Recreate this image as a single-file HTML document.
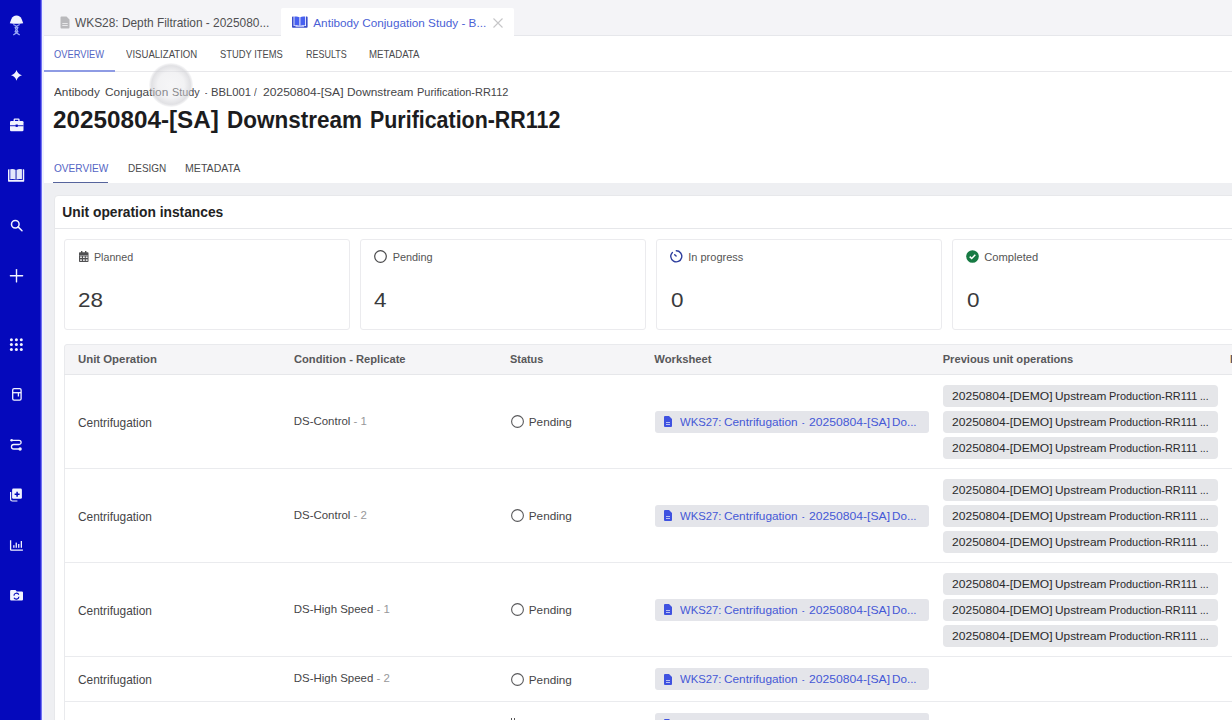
<!DOCTYPE html>
<html><head><meta charset="utf-8"><style>
*{box-sizing:border-box;margin:0;padding:0}
html,body{width:1232px;height:720px;overflow:hidden;background:#fff;font-family:"Liberation Sans",sans-serif;color:#333}
.t{position:absolute;line-height:1;white-space:nowrap}
.b{position:absolute}
svg{position:absolute;overflow:visible}
</style></head><body>
<div class="b" style="left:0;top:0;width:42px;height:720px;background:#0509bc"></div>
<div class="b" style="left:40px;top:0;width:1px;height:720px;background:#2a2ad8"></div><div class="b" style="left:41px;top:0;width:1px;height:720px;background:#7070f2"></div>
<div class="b" style="left:42px;top:0;width:1190px;height:36px;background:#f4f4f7;border-bottom:1px solid #e6e7eb"></div>
<div class="b" style="left:281px;top:8px;width:233px;height:29px;background:#fff;border-radius:2px 2px 0 0"></div>
<svg style="left:60px;top:16px" width="10" height="13" viewBox="0 0 10 13"><path d="M1.5 0.5h5l3 3v8a1 1 0 0 1-1 1h-7a1 1 0 0 1-1-1v-10a1 1 0 0 1 1-1z" fill="#b9b9bc"/><rect x="2.3" y="7" width="5.4" height="1" fill="#e8e8ea"/><rect x="2.3" y="9" width="5.4" height="1" fill="#e8e8ea"/></svg>
<div class="t" style="left:75px;top:18.48px;font-size:11.9px;color:#505052;font-weight:normal;">WKS28: Depth Filtration - 2025080...</div>
<svg style="left:292px;top:16.4px" width="16" height="12" viewBox="0 0 16 12"><path d="M0 1.2 Q0 0.4 0.8 0.4 L1.6 0.4 L1.6 10 L14 10 L14 0.4 L14.8 0.4 Q15.6 0.4 15.6 1.2 L15.6 11 Q15.6 11.7 14.8 11.7 L0.8 11.7 Q0 11.7 0 11z" fill="#3a4cc9"/><path d="M2.4 0.6 Q5.5 0 7.3 1.3 L7.3 9.8 Q5 8.9 2.4 9.6z" fill="#4760f0"/><path d="M8.3 1.3 Q10.1 0 13.2 0.6 L13.2 9.6 Q10.6 8.9 8.3 9.8z" fill="#4760f0"/><rect x="7.3" y="1" width="1" height="9" fill="#a9b3f3"/><path d="M3.5 10.6 H12.1" stroke="#c9d0fb" stroke-width="0.9"/></svg>
<div class="t" style="left:313.3px;top:16.62px;font-size:11.74px;color:#4a5fd5;font-weight:normal;">Antibody Conjugation Study - B...</div>
<svg style="left:493px;top:17.5px" width="10" height="10" viewBox="0 0 10 10"><path d="M0.5 0.5L9.5 9.5M9.5 0.5L0.5 9.5" stroke="#c6c6c8" stroke-width="1.1"/></svg>
<div class="b" style="left:42px;top:71px;width:1190px;height:1px;background:#e8e8eb"></div>
<div class="b" style="left:42px;top:70px;width:73px;height:2px;background:#8e9be4"></div>
<div class="t" style="left:54px;top:48.65px;font-size:11px;color:#5465c4;font-weight:normal;"><span style="display:inline-block;transform-origin:0 0;transform:scaleX(0.8461)">OVERVIEW</span></div>
<div class="t" style="left:126.3px;top:48.65px;font-size:11px;color:#4a4a4c;font-weight:normal;"><span style="display:inline-block;transform-origin:0 0;transform:scaleX(0.8721)">VISUALIZATION</span></div>
<div class="t" style="left:220px;top:48.65px;font-size:11px;color:#4a4a4c;font-weight:normal;"><span style="display:inline-block;transform-origin:0 0;transform:scaleX(0.8519)">STUDY ITEMS</span></div>
<div class="t" style="left:305.5px;top:48.65px;font-size:11px;color:#4a4a4c;font-weight:normal;"><span style="display:inline-block;transform-origin:0 0;transform:scaleX(0.8163)">RESULTS</span></div>
<div class="t" style="left:368.8px;top:48.65px;font-size:11px;color:#4a4a4c;font-weight:normal;"><span style="display:inline-block;transform-origin:0 0;transform:scaleX(0.8791)">METADATA</span></div>
<div class="t" style="left:54.2px;top:86.24px;font-size:11.72px;color:#454547;font-weight:normal;"><span style="display:inline-block;transform-origin:0 0;transform:scaleX(1.0043)">Antibody</span></div>
<div class="t" style="left:104.9px;top:86.24px;font-size:11.72px;color:#454547;font-weight:normal;"><span style="display:inline-block;transform-origin:0 0;transform:scaleX(1.0113)">Conjugation</span></div>
<div class="t" style="left:172.1px;top:86.24px;font-size:11.72px;color:#454547;font-weight:normal;"><span style="display:inline-block;transform-origin:0 0;transform:scaleX(0.9233)">Study</span></div>
<div class="t" style="left:205.3px;top:86.24px;font-size:11.72px;color:#454547;font-weight:normal;"><span style="display:inline-block;transform-origin:0 0;transform:scaleX(0.5750)">-</span></div>
<div class="t" style="left:211.14px;top:86.24px;font-size:11.72px;color:#454547;font-weight:normal;"><span style="display:inline-block;transform-origin:0 0;transform:scaleX(0.9610)">BBL001</span></div>
<div class="t" style="left:254.0px;top:86.24px;font-size:11.72px;color:#454547;font-weight:normal;"><span style="display:inline-block;transform-origin:0 0;transform:scaleX(0.8250)">/</span></div>
<div class="t" style="left:262.8px;top:86.24px;font-size:11.72px;color:#454547;font-weight:normal;"><span style="display:inline-block;transform-origin:0 0;transform:scaleX(1.0295)">20250804-[SA]</span></div>
<div class="t" style="left:346.59px;top:86.24px;font-size:11.72px;color:#454547;font-weight:normal;"><span style="display:inline-block;transform-origin:0 0;transform:scaleX(1.0109)">Downstream</span></div>
<div class="t" style="left:416.76px;top:86.24px;font-size:11.72px;color:#454547;font-weight:normal;"><span style="display:inline-block;transform-origin:0 0;transform:scaleX(0.9375)">Purification-RR112</span></div>
<div class="t" style="left:53.28px;top:107.57px;font-size:23.8px;color:#1c1c1e;font-weight:bold;"><span style="display:inline-block;transform-origin:0 0;transform:scaleX(1.0193)">20250804-[SA]</span></div>
<div class="t" style="left:226.95px;top:107.57px;font-size:23.8px;color:#1c1c1e;font-weight:bold;"><span style="display:inline-block;transform-origin:0 0;transform:scaleX(0.9454)">Downstream</span></div>
<div class="t" style="left:369.9px;top:107.57px;font-size:23.8px;color:#1c1c1e;font-weight:bold;"><span style="display:inline-block;transform-origin:0 0;transform:scaleX(0.8995)">Purification-RR112</span></div>
<div class="t" style="left:53.9px;top:162.65px;font-size:11px;color:#5465c4;font-weight:normal;"><span style="display:inline-block;transform-origin:0 0;transform:scaleX(0.9189)">OVERVIEW</span></div>
<div class="t" style="left:127.5px;top:162.65px;font-size:11px;color:#4a4a4c;font-weight:normal;"><span style="display:inline-block;transform-origin:0 0;transform:scaleX(0.9081)">DESIGN</span></div>
<div class="t" style="left:185px;top:162.65px;font-size:11px;color:#4a4a4c;font-weight:normal;"><span style="display:inline-block;transform-origin:0 0;transform:scaleX(0.9627)">METADATA</span></div>
<div class="b" style="left:42px;top:183px;width:1190px;height:537px;background:#eeeff2"></div>
<div class="b" style="left:53px;top:181.5px;width:55px;height:1.5px;background:#56649c"></div>
<div class="b" style="left:54px;top:195px;width:1200px;height:600px;background:#fff;border:1px solid #e7e8eb;border-radius:4px"></div>
<div class="b" style="left:55px;top:228px;width:1190px;height:1px;background:#e6e7ea"></div>
<div class="t" style="left:62.3px;top:205.57px;font-size:13.8px;color:#222;font-weight:bold;">Unit operation instances</div>
<div class="b" style="left:64px;top:239px;width:286px;height:91px;border:1px solid #ebebee;border-radius:3px;background:#fff"></div>
<div class="b" style="left:360px;top:239px;width:286px;height:91px;border:1px solid #ebebee;border-radius:3px;background:#fff"></div>
<div class="b" style="left:656px;top:239px;width:286px;height:91px;border:1px solid #ebebee;border-radius:3px;background:#fff"></div>
<div class="b" style="left:952px;top:239px;width:286px;height:91px;border:1px solid #ebebee;border-radius:3px;background:#fff"></div>
<svg style="left:78.5px;top:250.6px" width="10" height="12" viewBox="0 0 10 12"><rect x="0" y="1.2" width="9.5" height="9.9" rx="0.8" fill="#505052"/><rect x="2" y="0" width="1.4" height="2.4" fill="#505052"/><rect x="6" y="0" width="1.4" height="2.4" fill="#505052"/><rect x="0.6" y="4" width="8.3" height="0.8" fill="#a2a2a4"/><g fill="#fff"><rect x="1.1" y="5.5" width="1.8" height="1.4"/><rect x="4" y="5.5" width="1.8" height="1.4"/><rect x="6.8" y="5.5" width="1.8" height="1.4"/><rect x="1.1" y="8.4" width="1.8" height="1.4"/><rect x="4" y="8.4" width="1.8" height="1.4"/><rect x="6.8" y="8.4" width="1.8" height="1.4"/></g></svg>
<div class="t" style="left:94px;top:251.92px;font-size:10.68px;color:#555;font-weight:normal;">Planned</div>
<svg style="left:373.5px;top:250px" width="13" height="13" viewBox="0 0 13 13"><circle cx="6.5" cy="6.5" r="5.8" stroke="#4a4a4c" stroke-width="1.2" fill="none"/></svg>
<div class="t" style="left:392.7px;top:251.74px;font-size:10.9px;color:#555;font-weight:normal;">Pending</div>
<svg style="left:670.3px;top:250px" width="13" height="13" viewBox="0 0 13 13"><path d="M6.3 0.8 A5.5 5.5 0 1 1 2.4 2.4" stroke="#2f3f9e" stroke-width="1.4" fill="none" stroke-linecap="round"/><path d="M4.7 4.7 L6.1 6.1" stroke="#2f3f9e" stroke-width="1.4" stroke-linecap="round"/></svg>
<div class="t" style="left:688.3px;top:251.66px;font-size:10.99px;color:#555;font-weight:normal;">In progress</div>
<svg style="left:965.8px;top:250px" width="13" height="13" viewBox="0 0 13 13"><circle cx="6.5" cy="6.5" r="6.3" fill="#177a43"/><path d="M3.7 6.6 L5.7 8.5 L9.3 4.7" stroke="#fff" stroke-width="1.5" fill="none"/></svg>
<div class="t" style="left:984.3px;top:251.51px;font-size:11.17px;color:#555;font-weight:normal;">Completed</div>
<div class="t" style="left:78.4px;top:289.15px;font-size:21px;color:#3a3a3c;font-weight:normal;"><span style="display:inline-block;transform-origin:0 0;transform:scaleX(1.07)">28</span></div>
<div class="t" style="left:374px;top:289.15px;font-size:21px;color:#3a3a3c;font-weight:normal;"><span style="display:inline-block;transform-origin:0 0;transform:scaleX(1.07)">4</span></div>
<div class="t" style="left:670.8px;top:289.15px;font-size:21px;color:#3a3a3c;font-weight:normal;"><span style="display:inline-block;transform-origin:0 0;transform:scaleX(1.07)">0</span></div>
<div class="t" style="left:966.5px;top:289.15px;font-size:21px;color:#3a3a3c;font-weight:normal;"><span style="display:inline-block;transform-origin:0 0;transform:scaleX(1.07)">0</span></div>
<div class="b" style="left:64px;top:344px;width:1200px;height:31px;background:#f5f5f7;border:1px solid #e9eaed;border-radius:3px 3px 0 0"></div>
<div class="b" style="left:64px;top:374px;width:1200px;height:400px;border-left:1px solid #e9eaed;background:#fff"></div>
<div class="b" style="left:64px;top:374px;width:1200px;height:1px;background:#e6e7ea"></div>
<div class="t" style="left:78px;top:353.53px;font-size:11.38px;color:#58585a;font-weight:bold;">Unit Operation</div>
<div class="t" style="left:294px;top:353.71px;font-size:11.17px;color:#58585a;font-weight:bold;">Condition - Replicate</div>
<div class="t" style="left:510px;top:353.94px;font-size:10.9px;color:#58585a;font-weight:bold;">Status</div>
<div class="t" style="left:654.3px;top:353.64px;font-size:11.25px;color:#58585a;font-weight:bold;">Worksheet</div>
<div class="t" style="left:942.7px;top:353.72px;font-size:11.15px;color:#58585a;font-weight:bold;">Previous unit operations</div>
<div class="t" style="left:1230px;top:353.72px;font-size:11.15px;color:#58585a;font-weight:bold;">I</div>
<div class="b" style="left:65px;top:468px;width:1190px;height:1px;background:#eaebee"></div>
<div class="t" style="left:78px;top:417.69px;font-size:11.89px;color:#454547;font-weight:normal;">Centrifugation</div>
<div class="t" style="left:293.8px;top:415.67px;font-size:11.45px;color:#454547;font-weight:normal;">DS-Control <span style="color:#98989a">- 1</span></div>
<svg style="left:510.5px;top:415.00px" width="13" height="13" viewBox="0 0 13 13"><circle cx="6.5" cy="6.5" r="5.9" stroke="#59595b" stroke-width="1.1" fill="none"/></svg>
<div class="t" style="left:528.8px;top:416.44px;font-size:11.72px;color:#454547;font-weight:normal;">Pending</div>
<div class="b" style="left:655px;top:410.50px;width:274px;height:22px;background:#e4e5ea;border-radius:3px"></div>
<svg style="left:664.2px;top:416.00px" width="8" height="11" viewBox="0 0 8 11"><path d="M0 1a1 1 0 0 1 1-1h4l3 3v7a1 1 0 0 1-1 1h-6a1 1 0 0 1-1-1z" fill="#3f52e0"/><rect x="2" y="6" width="4" height="0.9" fill="#c9cff7"/><rect x="2" y="8" width="4" height="0.9" fill="#c9cff7"/></svg>
<div class="t" style="left:680.4px;top:415.91px;font-size:11.75px;color:#4458d6;font-weight:normal;"><span style="display:inline-block;transform-origin:0 0;transform:scaleX(0.9619)">WKS27:</span></div>
<div class="t" style="left:724.0px;top:415.91px;font-size:11.75px;color:#4458d6;font-weight:normal;"><span style="display:inline-block;transform-origin:0 0;transform:scaleX(1.0068)">Centrifugation</span></div>
<div class="t" style="left:802.1px;top:415.91px;font-size:11.75px;color:#4458d6;font-weight:normal;"><span style="display:inline-block;transform-origin:0 0;transform:scaleX(0.6250)">-</span></div>
<div class="t" style="left:809.2px;top:415.91px;font-size:11.75px;color:#4458d6;font-weight:normal;"><span style="display:inline-block;transform-origin:0 0;transform:scaleX(1.0333)">20250804-[SA]</span></div>
<div class="t" style="left:892.41px;top:415.91px;font-size:11.75px;color:#4458d6;font-weight:normal;"><span style="display:inline-block;transform-origin:0 0;transform:scaleX(0.9913)">Do...</span></div>
<div class="b" style="left:943px;top:385px;width:275px;height:22px;background:#e5e6e9;border-radius:4px"></div>
<div class="t" style="left:951.9px;top:390.67px;font-size:11.45px;color:#2a2a2c;font-weight:normal;"><span style="display:inline-block;transform-origin:0 0;transform:scaleX(1.0547)">20250804-[DEMO]</span></div>
<div class="t" style="left:1054.96px;top:390.67px;font-size:11.45px;color:#2a2a2c;font-weight:normal;"><span style="display:inline-block;transform-origin:0 0;transform:scaleX(1.0375)">Upstream</span></div>
<div class="t" style="left:1108.74px;top:390.67px;font-size:11.45px;color:#2a2a2c;font-weight:normal;"><span style="display:inline-block;transform-origin:0 0;transform:scaleX(0.9560)">Production-RR111</span></div>
<div class="t" style="left:1199.71px;top:390.67px;font-size:11.45px;color:#2a2a2c;font-weight:normal;"><span style="display:inline-block;transform-origin:0 0;transform:scaleX(0.8875)">...</span></div>
<div class="b" style="left:943px;top:411px;width:275px;height:22px;background:#e5e6e9;border-radius:4px"></div>
<div class="t" style="left:951.9px;top:416.67px;font-size:11.45px;color:#2a2a2c;font-weight:normal;"><span style="display:inline-block;transform-origin:0 0;transform:scaleX(1.0547)">20250804-[DEMO]</span></div>
<div class="t" style="left:1054.96px;top:416.67px;font-size:11.45px;color:#2a2a2c;font-weight:normal;"><span style="display:inline-block;transform-origin:0 0;transform:scaleX(1.0375)">Upstream</span></div>
<div class="t" style="left:1108.74px;top:416.67px;font-size:11.45px;color:#2a2a2c;font-weight:normal;"><span style="display:inline-block;transform-origin:0 0;transform:scaleX(0.9560)">Production-RR111</span></div>
<div class="t" style="left:1199.71px;top:416.67px;font-size:11.45px;color:#2a2a2c;font-weight:normal;"><span style="display:inline-block;transform-origin:0 0;transform:scaleX(0.8875)">...</span></div>
<div class="b" style="left:943px;top:437px;width:275px;height:22px;background:#e5e6e9;border-radius:4px"></div>
<div class="t" style="left:951.9px;top:442.67px;font-size:11.45px;color:#2a2a2c;font-weight:normal;"><span style="display:inline-block;transform-origin:0 0;transform:scaleX(1.0547)">20250804-[DEMO]</span></div>
<div class="t" style="left:1054.96px;top:442.67px;font-size:11.45px;color:#2a2a2c;font-weight:normal;"><span style="display:inline-block;transform-origin:0 0;transform:scaleX(1.0375)">Upstream</span></div>
<div class="t" style="left:1108.74px;top:442.67px;font-size:11.45px;color:#2a2a2c;font-weight:normal;"><span style="display:inline-block;transform-origin:0 0;transform:scaleX(0.9560)">Production-RR111</span></div>
<div class="t" style="left:1199.71px;top:442.67px;font-size:11.45px;color:#2a2a2c;font-weight:normal;"><span style="display:inline-block;transform-origin:0 0;transform:scaleX(0.8875)">...</span></div>
<div class="b" style="left:65px;top:562px;width:1190px;height:1px;background:#eaebee"></div>
<div class="t" style="left:78px;top:511.69px;font-size:11.89px;color:#454547;font-weight:normal;">Centrifugation</div>
<div class="t" style="left:293.8px;top:509.67px;font-size:11.45px;color:#454547;font-weight:normal;">DS-Control <span style="color:#98989a">- 2</span></div>
<svg style="left:510.5px;top:509.00px" width="13" height="13" viewBox="0 0 13 13"><circle cx="6.5" cy="6.5" r="5.9" stroke="#59595b" stroke-width="1.1" fill="none"/></svg>
<div class="t" style="left:528.8px;top:510.44px;font-size:11.72px;color:#454547;font-weight:normal;">Pending</div>
<div class="b" style="left:655px;top:504.50px;width:274px;height:22px;background:#e4e5ea;border-radius:3px"></div>
<svg style="left:664.2px;top:510.00px" width="8" height="11" viewBox="0 0 8 11"><path d="M0 1a1 1 0 0 1 1-1h4l3 3v7a1 1 0 0 1-1 1h-6a1 1 0 0 1-1-1z" fill="#3f52e0"/><rect x="2" y="6" width="4" height="0.9" fill="#c9cff7"/><rect x="2" y="8" width="4" height="0.9" fill="#c9cff7"/></svg>
<div class="t" style="left:680.4px;top:509.91px;font-size:11.75px;color:#4458d6;font-weight:normal;"><span style="display:inline-block;transform-origin:0 0;transform:scaleX(0.9619)">WKS27:</span></div>
<div class="t" style="left:724.0px;top:509.91px;font-size:11.75px;color:#4458d6;font-weight:normal;"><span style="display:inline-block;transform-origin:0 0;transform:scaleX(1.0068)">Centrifugation</span></div>
<div class="t" style="left:802.1px;top:509.91px;font-size:11.75px;color:#4458d6;font-weight:normal;"><span style="display:inline-block;transform-origin:0 0;transform:scaleX(0.6250)">-</span></div>
<div class="t" style="left:809.2px;top:509.91px;font-size:11.75px;color:#4458d6;font-weight:normal;"><span style="display:inline-block;transform-origin:0 0;transform:scaleX(1.0333)">20250804-[SA]</span></div>
<div class="t" style="left:892.41px;top:509.91px;font-size:11.75px;color:#4458d6;font-weight:normal;"><span style="display:inline-block;transform-origin:0 0;transform:scaleX(0.9913)">Do...</span></div>
<div class="b" style="left:943px;top:479px;width:275px;height:22px;background:#e5e6e9;border-radius:4px"></div>
<div class="t" style="left:951.9px;top:484.67px;font-size:11.45px;color:#2a2a2c;font-weight:normal;"><span style="display:inline-block;transform-origin:0 0;transform:scaleX(1.0547)">20250804-[DEMO]</span></div>
<div class="t" style="left:1054.96px;top:484.67px;font-size:11.45px;color:#2a2a2c;font-weight:normal;"><span style="display:inline-block;transform-origin:0 0;transform:scaleX(1.0375)">Upstream</span></div>
<div class="t" style="left:1108.74px;top:484.67px;font-size:11.45px;color:#2a2a2c;font-weight:normal;"><span style="display:inline-block;transform-origin:0 0;transform:scaleX(0.9560)">Production-RR111</span></div>
<div class="t" style="left:1199.71px;top:484.67px;font-size:11.45px;color:#2a2a2c;font-weight:normal;"><span style="display:inline-block;transform-origin:0 0;transform:scaleX(0.8875)">...</span></div>
<div class="b" style="left:943px;top:505px;width:275px;height:22px;background:#e5e6e9;border-radius:4px"></div>
<div class="t" style="left:951.9px;top:510.67px;font-size:11.45px;color:#2a2a2c;font-weight:normal;"><span style="display:inline-block;transform-origin:0 0;transform:scaleX(1.0547)">20250804-[DEMO]</span></div>
<div class="t" style="left:1054.96px;top:510.67px;font-size:11.45px;color:#2a2a2c;font-weight:normal;"><span style="display:inline-block;transform-origin:0 0;transform:scaleX(1.0375)">Upstream</span></div>
<div class="t" style="left:1108.74px;top:510.67px;font-size:11.45px;color:#2a2a2c;font-weight:normal;"><span style="display:inline-block;transform-origin:0 0;transform:scaleX(0.9560)">Production-RR111</span></div>
<div class="t" style="left:1199.71px;top:510.67px;font-size:11.45px;color:#2a2a2c;font-weight:normal;"><span style="display:inline-block;transform-origin:0 0;transform:scaleX(0.8875)">...</span></div>
<div class="b" style="left:943px;top:531px;width:275px;height:22px;background:#e5e6e9;border-radius:4px"></div>
<div class="t" style="left:951.9px;top:536.67px;font-size:11.45px;color:#2a2a2c;font-weight:normal;"><span style="display:inline-block;transform-origin:0 0;transform:scaleX(1.0547)">20250804-[DEMO]</span></div>
<div class="t" style="left:1054.96px;top:536.67px;font-size:11.45px;color:#2a2a2c;font-weight:normal;"><span style="display:inline-block;transform-origin:0 0;transform:scaleX(1.0375)">Upstream</span></div>
<div class="t" style="left:1108.74px;top:536.67px;font-size:11.45px;color:#2a2a2c;font-weight:normal;"><span style="display:inline-block;transform-origin:0 0;transform:scaleX(0.9560)">Production-RR111</span></div>
<div class="t" style="left:1199.71px;top:536.67px;font-size:11.45px;color:#2a2a2c;font-weight:normal;"><span style="display:inline-block;transform-origin:0 0;transform:scaleX(0.8875)">...</span></div>
<div class="b" style="left:65px;top:656px;width:1190px;height:1px;background:#eaebee"></div>
<div class="t" style="left:78px;top:605.69px;font-size:11.89px;color:#454547;font-weight:normal;">Centrifugation</div>
<div class="t" style="left:293.8px;top:603.67px;font-size:11.45px;color:#454547;font-weight:normal;">DS-High Speed <span style="color:#98989a">- 1</span></div>
<svg style="left:510.5px;top:603.00px" width="13" height="13" viewBox="0 0 13 13"><circle cx="6.5" cy="6.5" r="5.9" stroke="#59595b" stroke-width="1.1" fill="none"/></svg>
<div class="t" style="left:528.8px;top:604.44px;font-size:11.72px;color:#454547;font-weight:normal;">Pending</div>
<div class="b" style="left:655px;top:598.50px;width:274px;height:22px;background:#e4e5ea;border-radius:3px"></div>
<svg style="left:664.2px;top:604.00px" width="8" height="11" viewBox="0 0 8 11"><path d="M0 1a1 1 0 0 1 1-1h4l3 3v7a1 1 0 0 1-1 1h-6a1 1 0 0 1-1-1z" fill="#3f52e0"/><rect x="2" y="6" width="4" height="0.9" fill="#c9cff7"/><rect x="2" y="8" width="4" height="0.9" fill="#c9cff7"/></svg>
<div class="t" style="left:680.4px;top:603.91px;font-size:11.75px;color:#4458d6;font-weight:normal;"><span style="display:inline-block;transform-origin:0 0;transform:scaleX(0.9619)">WKS27:</span></div>
<div class="t" style="left:724.0px;top:603.91px;font-size:11.75px;color:#4458d6;font-weight:normal;"><span style="display:inline-block;transform-origin:0 0;transform:scaleX(1.0068)">Centrifugation</span></div>
<div class="t" style="left:802.1px;top:603.91px;font-size:11.75px;color:#4458d6;font-weight:normal;"><span style="display:inline-block;transform-origin:0 0;transform:scaleX(0.6250)">-</span></div>
<div class="t" style="left:809.2px;top:603.91px;font-size:11.75px;color:#4458d6;font-weight:normal;"><span style="display:inline-block;transform-origin:0 0;transform:scaleX(1.0333)">20250804-[SA]</span></div>
<div class="t" style="left:892.41px;top:603.91px;font-size:11.75px;color:#4458d6;font-weight:normal;"><span style="display:inline-block;transform-origin:0 0;transform:scaleX(0.9913)">Do...</span></div>
<div class="b" style="left:943px;top:573px;width:275px;height:22px;background:#e5e6e9;border-radius:4px"></div>
<div class="t" style="left:951.9px;top:578.67px;font-size:11.45px;color:#2a2a2c;font-weight:normal;"><span style="display:inline-block;transform-origin:0 0;transform:scaleX(1.0547)">20250804-[DEMO]</span></div>
<div class="t" style="left:1054.96px;top:578.67px;font-size:11.45px;color:#2a2a2c;font-weight:normal;"><span style="display:inline-block;transform-origin:0 0;transform:scaleX(1.0375)">Upstream</span></div>
<div class="t" style="left:1108.74px;top:578.67px;font-size:11.45px;color:#2a2a2c;font-weight:normal;"><span style="display:inline-block;transform-origin:0 0;transform:scaleX(0.9560)">Production-RR111</span></div>
<div class="t" style="left:1199.71px;top:578.67px;font-size:11.45px;color:#2a2a2c;font-weight:normal;"><span style="display:inline-block;transform-origin:0 0;transform:scaleX(0.8875)">...</span></div>
<div class="b" style="left:943px;top:599px;width:275px;height:22px;background:#e5e6e9;border-radius:4px"></div>
<div class="t" style="left:951.9px;top:604.67px;font-size:11.45px;color:#2a2a2c;font-weight:normal;"><span style="display:inline-block;transform-origin:0 0;transform:scaleX(1.0547)">20250804-[DEMO]</span></div>
<div class="t" style="left:1054.96px;top:604.67px;font-size:11.45px;color:#2a2a2c;font-weight:normal;"><span style="display:inline-block;transform-origin:0 0;transform:scaleX(1.0375)">Upstream</span></div>
<div class="t" style="left:1108.74px;top:604.67px;font-size:11.45px;color:#2a2a2c;font-weight:normal;"><span style="display:inline-block;transform-origin:0 0;transform:scaleX(0.9560)">Production-RR111</span></div>
<div class="t" style="left:1199.71px;top:604.67px;font-size:11.45px;color:#2a2a2c;font-weight:normal;"><span style="display:inline-block;transform-origin:0 0;transform:scaleX(0.8875)">...</span></div>
<div class="b" style="left:943px;top:625px;width:275px;height:22px;background:#e5e6e9;border-radius:4px"></div>
<div class="t" style="left:951.9px;top:630.67px;font-size:11.45px;color:#2a2a2c;font-weight:normal;"><span style="display:inline-block;transform-origin:0 0;transform:scaleX(1.0547)">20250804-[DEMO]</span></div>
<div class="t" style="left:1054.96px;top:630.67px;font-size:11.45px;color:#2a2a2c;font-weight:normal;"><span style="display:inline-block;transform-origin:0 0;transform:scaleX(1.0375)">Upstream</span></div>
<div class="t" style="left:1108.74px;top:630.67px;font-size:11.45px;color:#2a2a2c;font-weight:normal;"><span style="display:inline-block;transform-origin:0 0;transform:scaleX(0.9560)">Production-RR111</span></div>
<div class="t" style="left:1199.71px;top:630.67px;font-size:11.45px;color:#2a2a2c;font-weight:normal;"><span style="display:inline-block;transform-origin:0 0;transform:scaleX(0.8875)">...</span></div>
<div class="b" style="left:65px;top:701px;width:1190px;height:1px;background:#eaebee"></div>
<div class="t" style="left:78px;top:675.19px;font-size:11.89px;color:#454547;font-weight:normal;">Centrifugation</div>
<div class="t" style="left:293.8px;top:673.17px;font-size:11.45px;color:#454547;font-weight:normal;">DS-High Speed <span style="color:#98989a">- 2</span></div>
<svg style="left:510.5px;top:672.50px" width="13" height="13" viewBox="0 0 13 13"><circle cx="6.5" cy="6.5" r="5.9" stroke="#59595b" stroke-width="1.1" fill="none"/></svg>
<div class="t" style="left:528.8px;top:673.94px;font-size:11.72px;color:#454547;font-weight:normal;">Pending</div>
<div class="b" style="left:655px;top:668.00px;width:274px;height:22px;background:#e4e5ea;border-radius:3px"></div>
<svg style="left:664.2px;top:673.50px" width="8" height="11" viewBox="0 0 8 11"><path d="M0 1a1 1 0 0 1 1-1h4l3 3v7a1 1 0 0 1-1 1h-6a1 1 0 0 1-1-1z" fill="#3f52e0"/><rect x="2" y="6" width="4" height="0.9" fill="#c9cff7"/><rect x="2" y="8" width="4" height="0.9" fill="#c9cff7"/></svg>
<div class="t" style="left:680.4px;top:673.41px;font-size:11.75px;color:#4458d6;font-weight:normal;"><span style="display:inline-block;transform-origin:0 0;transform:scaleX(0.9619)">WKS27:</span></div>
<div class="t" style="left:724.0px;top:673.41px;font-size:11.75px;color:#4458d6;font-weight:normal;"><span style="display:inline-block;transform-origin:0 0;transform:scaleX(1.0068)">Centrifugation</span></div>
<div class="t" style="left:802.1px;top:673.41px;font-size:11.75px;color:#4458d6;font-weight:normal;"><span style="display:inline-block;transform-origin:0 0;transform:scaleX(0.6250)">-</span></div>
<div class="t" style="left:809.2px;top:673.41px;font-size:11.75px;color:#4458d6;font-weight:normal;"><span style="display:inline-block;transform-origin:0 0;transform:scaleX(1.0333)">20250804-[SA]</span></div>
<div class="t" style="left:892.41px;top:673.41px;font-size:11.75px;color:#4458d6;font-weight:normal;"><span style="display:inline-block;transform-origin:0 0;transform:scaleX(0.9913)">Do...</span></div>
<div class="b" style="left:65px;top:746px;width:1190px;height:1px;background:#eaebee"></div>
<div class="t" style="left:293.8px;top:721.17px;font-size:11.45px;color:#454547;font-weight:normal;">DS-High Speed <span style="color:#98989a">- 3</span></div>
<div class="b" style="left:511px;top:718px;width:1.3px;height:5px;background:#555"></div><div class="b" style="left:514px;top:718px;width:1.3px;height:5px;background:#555"></div>
<div class="b" style="left:655px;top:713.00px;width:274px;height:22px;background:#e4e5ea;border-radius:3px"></div>
<svg style="left:664.2px;top:718.50px" width="8" height="11" viewBox="0 0 8 11"><path d="M0 1a1 1 0 0 1 1-1h4l3 3v7a1 1 0 0 1-1 1h-6a1 1 0 0 1-1-1z" fill="#3f52e0"/><rect x="2" y="6" width="4" height="0.9" fill="#c9cff7"/><rect x="2" y="8" width="4" height="0.9" fill="#c9cff7"/></svg>
<div class="t" style="left:680.4px;top:718.41px;font-size:11.75px;color:#4458d6;font-weight:normal;"><span style="display:inline-block;transform-origin:0 0;transform:scaleX(0.9619)">WKS27:</span></div>
<div class="t" style="left:724.0px;top:718.41px;font-size:11.75px;color:#4458d6;font-weight:normal;"><span style="display:inline-block;transform-origin:0 0;transform:scaleX(1.0068)">Centrifugation</span></div>
<div class="t" style="left:802.1px;top:718.41px;font-size:11.75px;color:#4458d6;font-weight:normal;"><span style="display:inline-block;transform-origin:0 0;transform:scaleX(0.6250)">-</span></div>
<div class="t" style="left:809.2px;top:718.41px;font-size:11.75px;color:#4458d6;font-weight:normal;"><span style="display:inline-block;transform-origin:0 0;transform:scaleX(1.0333)">20250804-[SA]</span></div>
<div class="t" style="left:892.41px;top:718.41px;font-size:11.75px;color:#4458d6;font-weight:normal;"><span style="display:inline-block;transform-origin:0 0;transform:scaleX(0.9913)">Do...</span></div>
<div class="b" style="left:149px;top:63px;width:44px;height:44px;border-radius:50%;background:radial-gradient(circle closest-side, rgba(228,228,232,0.35) 0%, rgba(226,226,230,0.45) 60%, rgba(205,205,210,0.6) 88%, rgba(215,215,220,0.15) 100%)"></div>
<div class="b" style="left:42px;top:0;width:2px;height:720px;background:#eef1ff"></div>
<svg style="left:0;top:0" width="42" height="620" viewBox="0 0 42 620">
<path fill="#f2f3ff" d="M9.8 23.2 L11.3 19.2 Q12.8 15.5 16.5 15.5 Q20.2 15.5 21.7 19.2 L23.2 23.2 Q16.5 24.2 9.8 23.2z"/>
<g stroke="#9aa8f6" stroke-width="1.3" fill="none">
<path d="M13.3 24.5 Q19.7 27.5 16.5 29.5 Q13.3 31.5 19.7 35"/><path d="M19.7 24.5 Q13.3 27.5 16.5 29.5 Q19.7 31.5 13.3 35"/>
<path d="M14.5 27.3 H18.5 M14.5 31.7 H18.5" stroke-width="1"/>
</g>
<path fill="#f2f3ff" d="M16.5 70 Q17.6 74.1 22 75.3 Q17.6 76.5 16.5 80.7 Q15.4 76.5 11 75.3 Q15.4 74.1 16.5 70z"/>
<g fill="#f2f3ff"><rect x="10" y="121" width="13.5" height="10.3" rx="1.3"/><path d="M13.6 121 v-1.4 a1.2 1.2 0 0 1 1.2-1.2 h3.6 a1.2 1.2 0 0 1 1.2 1.2 v1.4 h-1.3 v-1.3 h-3.4 v1.3z"/></g>
<rect x="10" y="125.3" width="13.5" height="0.9" fill="#0509bc"/><rect x="15.6" y="124.5" width="2.2" height="2.4" fill="#0509bc"/>
<g transform="translate(8 168.7) scale(1.04 1.1)"><path d="M0 1.2 Q0 0.6 0.6 0.6 L1.4 0.6 L1.4 10.2 L14.2 10.2 L14.2 0.6 L15 0.6 Q15.6 0.6 15.6 1.2 L15.6 11.2 Q15.6 11.8 15 11.8 L0.6 11.8 Q0 11.8 0 11.2z" fill="#f2f3ff"/><path d="M2.2 0.4 Q5.5 -0.2 7.3 1.1 L7.3 9.9 Q5 9.1 2.2 9.7z" fill="#e4e7fb"/><path d="M8.3 1.1 Q10.1 -0.2 13.4 0.4 L13.4 9.7 Q10.6 9.1 8.3 9.9z" fill="#e4e7fb"/><rect x="7.3" y="1" width="1" height="9" fill="#8088c8"/></g>
<g stroke="#f2f3ff" fill="none" stroke-width="1.5"><circle cx="15.3" cy="224.2" r="3.8"/><path d="M18.1 226.9 L22 230.8" stroke-linecap="round"/></g>
<g stroke="#f2f3ff" stroke-width="1.4" stroke-linecap="round"><path d="M16.5 269.6 V281.9"/><path d="M10.4 275.7 H22.6"/></g>
<g fill="#f2f3ff">
<circle cx="11.4" cy="339.7" r="1.5"/><circle cx="16.4" cy="339.7" r="1.5"/><circle cx="21.3" cy="339.7" r="1.5"/>
<circle cx="11.4" cy="344.5" r="1.5"/><circle cx="16.4" cy="344.5" r="1.5"/><circle cx="21.3" cy="344.5" r="1.5"/>
<circle cx="11.4" cy="349.4" r="1.5"/><circle cx="16.4" cy="349.4" r="1.5"/><circle cx="21.3" cy="349.4" r="1.5"/>
</g>
<g stroke="#f2f3ff" stroke-width="1.3" fill="none"><rect x="12.7" y="388.6" width="8.4" height="11.6" rx="1.4"/><path d="M12.7 392.7 H21.1"/><path d="M18.4 392.7 V396.5"/></g>
<path d="M11.5 440.3 H19 A2.1 2.1 0 0 1 19 444.5 H13.7 A2.25 2.25 0 0 0 13.7 449 H20" stroke="#f2f3ff" stroke-width="1.3" fill="none"/>
<circle cx="11.6" cy="440.3" r="1.3" fill="#f2f3ff"/><circle cx="20.1" cy="449" r="1.7" fill="#f2f3ff"/>
<rect x="12.1" y="488.6" width="9.8" height="10.1" rx="1.3" fill="#f2f3ff"/>
<path d="M10.6 492 v7.2 a1.8 1.8 0 0 0 1.8 1.8 h5" stroke="#f2f3ff" stroke-width="1.2" fill="none"/>
<path d="M17.1 491.7 v5 M14.6 494.2 h5" stroke="#0509bc" stroke-width="1.5"/>
<path d="M10.6 540.2 V549.5 Q10.6 550.1 11.2 550.1 H22.9" stroke="#f2f3ff" stroke-width="1.3" fill="none"/>
<g fill="#f2f3ff"><rect x="13.2" y="545.2" width="1.3" height="2.6"/><rect x="15.6" y="542.6" width="1.3" height="5.2"/><rect x="18.1" y="544" width="1.3" height="3.8"/><rect x="20.7" y="541" width="1.3" height="6.8"/></g>
<path fill="#f2f3ff" d="M10.1 591.2 a1.1 1.1 0 0 1 1.1-1.1 h4.3 l1.3 1.3 h5.1 a1.1 1.1 0 0 1 1.1 1.1 v7 a1.1 1.1 0 0 1-1.1 1.1 h-10.7 a1.1 1.1 0 0 1-1.1-1.1z"/>
<g stroke="#0509bc" stroke-width="1.2" fill="none"><path d="M13.9 595.6 a2.6 2.6 0 0 1 4.9-1"/><path d="M18.9 596.8 a2.6 2.6 0 0 1-4.9 1"/></g>
</svg>
</body></html>
